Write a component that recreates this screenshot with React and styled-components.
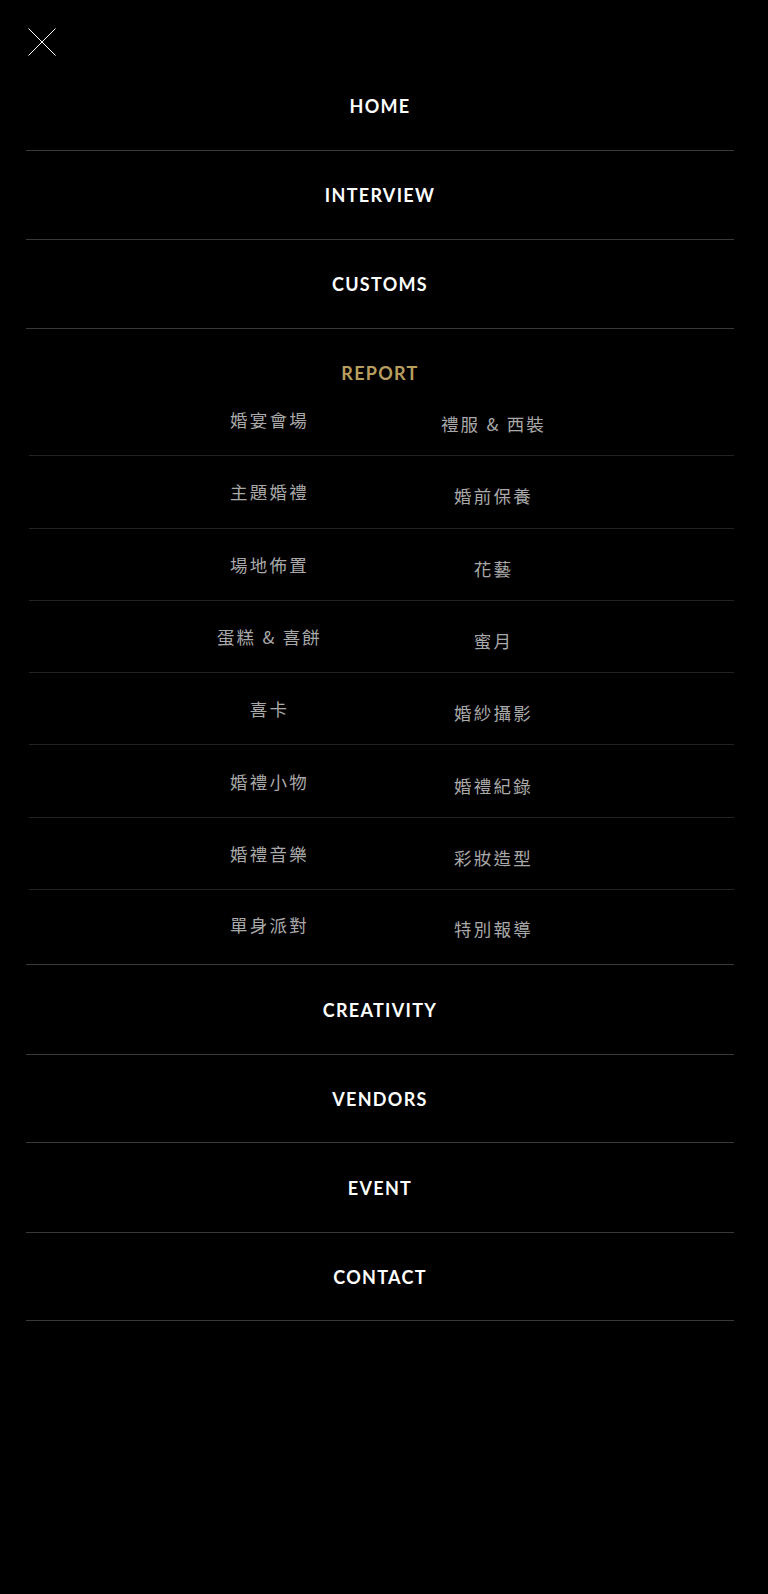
import React from "react";
import styled, { createGlobalStyle } from "styled-components";

const GlobalStyle = createGlobalStyle`
  html, body {
    margin: 0;
    padding: 0;
    background: #000;
  }
  body {
    font-family: "Lato", "Noto Sans CJK TC", sans-serif;
    color: #fff;
  }
  * { box-sizing: border-box; }
`;

const Page = styled.div`
  background: #000;
  min-height: 1594px;
  width: 768px;
`;

const Header = styled.div`
  padding: 28px 28px 6px;
  height: 62px;
`;

const CloseButton = styled.button`
  display: block;
  width: 28px;
  height: 28px;
  padding: 0;
  border: 0;
  background: transparent;
  cursor: pointer;
  svg { display: block; }
`;

const Nav = styled.nav`
  margin-left: 26px;
  width: 708px;
`;

const MainItem = styled.a`
  display: flex;
  align-items: center;
  justify-content: center;
  height: ${(p) => p.$h || 89}px;
  border-bottom: 1px solid #3a3a3a;
  font-family: "Lato", sans-serif;
  font-weight: 700;
  font-size: 18px;
  letter-spacing: 1.3px;
  color: #fff;
  text-decoration: none;
`;

const Section = styled.div`
  border-bottom: 1px solid #3a3a3a;
  padding-bottom: 2px;
`;

const SectionTitle = styled.div`
  height: 55px;
  padding-top: 35px;
  text-align: center;
  font-family: "Lato", sans-serif;
  font-weight: 700;
  font-size: 18px;
  line-height: 19px;
  letter-spacing: 1.3px;
  color: #b79e5e;
`;

const SubList = styled.div`
  margin-left: 3px;
`;

const SubRow = styled.div`
  display: grid;
  grid-template-columns: 224px 224px;
  justify-content: center;
  height: 72.3px;
  border-bottom: ${(p) => (p.$last ? "none" : "1px solid #222")};
`;

const SubItem = styled.a`
  display: flex;
  align-items: center;
  justify-content: center;
  padding-top: ${(p) => (p.$right ? 8 : 0)}px;
  padding-bottom: ${(p) => (p.$lastRow ? 4 : 0)}px;
  font-family: "Noto Sans CJK TC", "Noto Sans", sans-serif;
  font-size: 17.5px;
  letter-spacing: 2.2px;
  color: #a9a9a9;
  text-decoration: none;
  white-space: nowrap;
`;

const topItems = ["HOME", "INTERVIEW", "CUSTOMS"];
const bottomItems = [
  { label: "CREATIVITY", h: 90 },
  { label: "VENDORS", h: 88 },
  { label: "EVENT", h: 90 },
  { label: "CONTACT", h: 88 },
];

const subRows = [
  ["婚宴會場", "禮服 & 西裝"],
  ["主題婚禮", "婚前保養"],
  ["場地佈置", "花藝"],
  ["蛋糕 & 喜餅", "蜜月"],
  ["喜卡", "婚紗攝影"],
  ["婚禮小物", "婚禮紀錄"],
  ["婚禮音樂", "彩妝造型"],
  ["單身派對", "特別報導"],
];

export default function App() {
  return (
    <Page>
      <GlobalStyle />
      <Header>
        <CloseButton aria-label="close">
          <svg width="28" height="28" viewBox="0 0 28 28">
            <line x1="0.5" y1="0.5" x2="27.5" y2="27.5" stroke="#fff" strokeWidth="1" />
            <line x1="27.5" y1="0.5" x2="0.5" y2="27.5" stroke="#fff" strokeWidth="1" />
          </svg>
        </CloseButton>
      </Header>
      <Nav>
        {topItems.map((t) => (
          <MainItem key={t} href="#" $h={89}>
            {t}
          </MainItem>
        ))}
        <Section>
          <SectionTitle>REPORT</SectionTitle>
          <SubList>
            {subRows.map(([l, r], i) => {
              const last = i === subRows.length - 1;
              return (
                <SubRow key={l} $last={last}>
                  <SubItem href="#" $lastRow={last}>{l}</SubItem>
                  <SubItem href="#" $right $lastRow={last}>
                    {r}
                  </SubItem>
                </SubRow>
              );
            })}
          </SubList>
        </Section>
        {bottomItems.map((b) => (
          <MainItem key={b.label} href="#" $h={b.h}>
            {b.label}
          </MainItem>
        ))}
      </Nav>
    </Page>
  );
}
